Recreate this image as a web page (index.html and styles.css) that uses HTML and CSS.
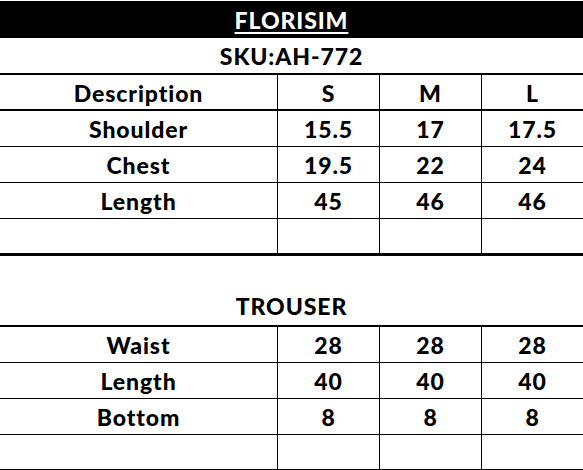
FILE: index.html
```html
<!DOCTYPE html>
<html lang="en">
<head>
<meta charset="utf-8">
<title>FLORISIM size chart</title>
<link rel="stylesheet" href="styles.css">
</head>
<body>
<div class="sheet">
  <div class="cell span brand"><span class="brand-text">FLORISIM</span></div>
  <div class="cell span sku">SKU:AH-772</div>

  <div class="cell head">Description</div>
  <div class="cell head col">S</div>
  <div class="cell head col">M</div>
  <div class="cell head col">L</div>

  <div class="cell">Shoulder</div>
  <div class="cell col">15.5</div>
  <div class="cell col">17</div>
  <div class="cell col">17.5</div>

  <div class="cell">Chest</div>
  <div class="cell col">19.5</div>
  <div class="cell col">22</div>
  <div class="cell col">24</div>

  <div class="cell">Length</div>
  <div class="cell col">45</div>
  <div class="cell col">46</div>
  <div class="cell col">46</div>

  <div class="cell end"></div>
  <div class="cell col end"></div>
  <div class="cell col end"></div>
  <div class="cell col end"></div>

  <div class="cell span trouser">TROUSER</div>

  <div class="cell">Waist</div>
  <div class="cell col">28</div>
  <div class="cell col">28</div>
  <div class="cell col">28</div>

  <div class="cell">Length</div>
  <div class="cell col">40</div>
  <div class="cell col">40</div>
  <div class="cell col">40</div>

  <div class="cell">Bottom</div>
  <div class="cell col">8</div>
  <div class="cell col">8</div>
  <div class="cell col">8</div>

  <div class="cell last"></div>
  <div class="cell col last"></div>
  <div class="cell col last"></div>
  <div class="cell col last"></div>
</div>
</body>
</html>
```

FILE: styles.css
```css
html, body {
  margin: 0;
  padding: 0;
  background: #fff;
}

.sheet {
  display: grid;
  grid-template-columns: 277px 102px 102px 102px;
  width: 583px;
  padding-top: 1px;
  font-family: "Lato", "Liberation Sans", sans-serif;
  font-weight: 900;
  font-size: 23px;
  letter-spacing: 0.9px;
  color: #000;
}

.cell {
  box-sizing: border-box;
  height: 36px;
  display: flex;
  align-items: center;
  justify-content: center;
  padding-top: 2px;
  border-bottom: 1px solid #000;
  line-height: 1;
  white-space: nowrap;
}

.col {
  border-left: 1px solid #000;
}

.span {
  grid-column: 1 / -1;
}

.brand {
  height: 37px;
  background: #000;
  color: #fff;
  border-bottom: none;
}

.brand-text {
  text-decoration: underline;
  text-decoration-thickness: 2px;
  text-underline-offset: 3px;
}

.sku {
  height: 37px;
  border-bottom: 2px solid #000;
}

.head {
  height: 36px;
  border-bottom: 2px solid #000;
}

.end {
  height: 37px;
  border-bottom: 3px solid #000;
}

.trouser {
  height: 71px;
  align-items: flex-end;
  padding-bottom: 7px;
  border-bottom: 2px solid #000;
}

.last {
  height: 35px;
}
```
